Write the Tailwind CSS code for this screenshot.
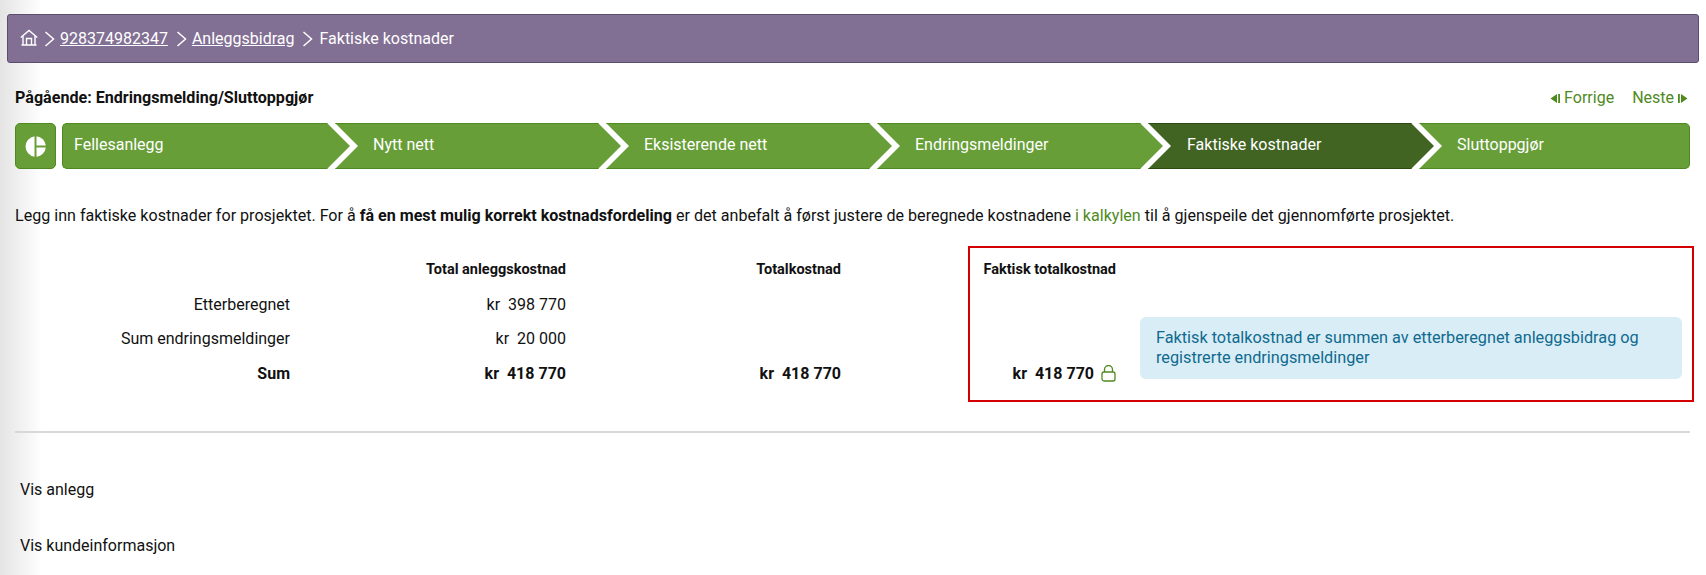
<!DOCTYPE html>
<html lang="en">

<head>
    <meta charset="UTF-8">
    <script src="https://cdn.jsdelivr.net/npm/@tailwindcss/browser@4"></script>
    <title>Faktiske kostnader</title>
</head>

<body class="bg-white text-[#111] font-['Roboto',sans-serif] text-[16px] h-[575px] overflow-hidden relative">

    <!-- left edge shade -->
    <div class="absolute left-0 top-0 bottom-0 w-[42px] bg-gradient-to-r from-[#e4e4e4] to-transparent pointer-events-none"></div>

    <div class="relative pl-[7px] pr-[7px] pt-[14px]">

        <!-- Breadcrumb -->
        <nav class="h-[49px] flex items-center gap-[6px] pl-[12px] rounded-[3px] bg-[#826f94] border border-[#5c4c6e] text-white">
            <svg class="w-[18px] h-[18px] -mt-[2px]" viewBox="0 0 18 18" fill="none" stroke="currentColor" stroke-width="1.4">
                <path d="M0.8 8.5 9 1.5 17.2 8.5M3 6.8V16H15V6.8M1.5 16H16.5M6.5 16V9.5H11.5V16" />
            </svg>
            <svg class="w-[11px] h-[16px]" viewBox="0 0 11 16" fill="none" stroke="currentColor" stroke-width="1.5"><path d="M1.5 1 9.5 8 1.5 15" /></svg>
            <a class="underline -ml-[1px]">928374982347</a>
            <svg class="w-[11px] h-[16px] ml-[2px]" viewBox="0 0 11 16" fill="none" stroke="currentColor" stroke-width="1.5"><path d="M1.5 1 9.5 8 1.5 15" /></svg>
            <a class="underline -ml-[1px]">Anleggsbidrag</a>
            <svg class="w-[11px] h-[16px] ml-[2px]" viewBox="0 0 11 16" fill="none" stroke="currentColor" stroke-width="1.5"><path d="M1.5 1 9.5 8 1.5 15" /></svg>
            <span>Faktiske kostnader</span>
        </nav>

        <div class="pl-[8px] pr-[9px]">

            <!-- Title row -->
            <div class="flex justify-between items-center mt-[25px] h-[20px]">
                <div class="font-bold text-[16.1px]">Pågående: Endringsmelding/Sluttoppgjør</div>
                <div class="flex items-center text-[#4f8a1e] pr-[2px]">
                    <svg class="w-[12px] h-[11px] mr-[2px]" viewBox="0 0 12 11" fill="currentColor"><path d="M7 1V10L0.5 5.5ZM8.2 1H10V10H8.2Z" /></svg>
                    <span>Forrige</span>
                    <span class="ml-[18px]">Neste</span>
                    <svg class="w-[12px] h-[11px] ml-[2px]" viewBox="0 0 12 11" fill="currentColor"><path d="M5 1V10L11.5 5.5ZM2 1H3.8V10H2Z" /></svg>
                </div>
            </div>

            <!-- Stepper -->
            <div class="flex mt-[15px] h-[46px] text-white">
                <div class="w-[41px] flex items-center justify-center rounded-[5px] bg-[#679e38] border border-[#4f8a1e] mr-[6px]">
                    <svg class="w-[21px] h-[21px]" viewBox="0 0 21 21" fill="white">
                        <path d="M9.5 0.2V20.8A10.4 10.4 0 0 1 9.5 0.2Z" />
                        <path d="M11.5 0.2A10.4 10.4 0 0 1 20.8 9.5H11.5Z" />
                        <path d="M11.5 11.5H20.8A10.4 10.4 0 0 1 11.5 20.8Z" />
                    </svg>
                </div>
                <div class="flex-1 flex min-w-0">
                    <div class="w-[288px] shrink-0 flex items-center pl-[11px] pb-[2px] rounded-l-[5px] bg-[#679e38] border-y border-l border-[#4f8a1e] [clip-path:polygon(0_0,calc(100%-23px)_0,100%_50%,calc(100%-23px)_100%,0_100%)]">Fellesanlegg</div>
                    <div class="w-[286px] shrink-0 -ml-[15px] flex items-center pl-[38px] pb-[2px] bg-[#679e38] border-y border-[#4f8a1e] [clip-path:polygon(0_0,calc(100%-23px)_0,100%_50%,calc(100%-23px)_100%,0_100%,23px_50%)]">Nytt nett</div>
                    <div class="w-[286px] shrink-0 -ml-[15px] flex items-center pl-[38px] pb-[2px] bg-[#679e38] border-y border-[#4f8a1e] [clip-path:polygon(0_0,calc(100%-23px)_0,100%_50%,calc(100%-23px)_100%,0_100%,23px_50%)]">Eksisterende nett</div>
                    <div class="w-[286px] shrink-0 -ml-[15px] flex items-center pl-[38px] pb-[2px] bg-[#679e38] border-y border-[#4f8a1e] [clip-path:polygon(0_0,calc(100%-23px)_0,100%_50%,calc(100%-23px)_100%,0_100%,23px_50%)]">Endringsmeldinger</div>
                    <div class="w-[286px] shrink-0 -ml-[15px] flex items-center pl-[39px] pb-[2px] bg-[#426423] border-y border-[#2c4a12] [clip-path:polygon(0_0,calc(100%-23px)_0,100%_50%,calc(100%-23px)_100%,0_100%,23px_50%)]">Faktiske kostnader</div>
                    <div class="flex-1 -ml-[15px] flex items-center pl-[38px] pb-[2px] rounded-r-[5px] bg-[#679e38] border-y border-r border-[#4f8a1e] [clip-path:polygon(0_0,100%_0,100%_100%,0_100%,23px_50%)]">Sluttoppgjør</div>
                </div>
            </div>

            <!-- Intro -->
            <p class="mt-[35px] leading-[24px] text-[16.08px] whitespace-nowrap">Legg inn faktiske kostnader for prosjektet. For å <b>få en mest mulig korrekt kostnadsfordeling</b> er det anbefalt å først justere de beregnede kostnadene <a class="text-[#4f8a1e]">i kalkylen</a> til å gjenspeile det gjennomførte prosjektet.</p>

            <!-- Costs -->
            <div class="flex mt-[18px]">
                <div class="w-[953px] shrink-0 grid grid-cols-[275px_276px_275px] grid-rows-[repeat(4,34.8px)] items-center text-right pt-[6.5px] h-[156px]">
                    <div></div>
                    <div class="font-bold text-[14.5px]">Total anleggskostnad</div>
                    <div class="font-bold text-[14.5px]">Totalkostnad</div>
                    <div>Etterberegnet</div>
                    <div>kr&nbsp; 398 770</div>
                    <div></div>
                    <div>Sum endringsmeldinger</div>
                    <div>kr&nbsp; 20 000</div>
                    <div></div>
                    <div class="font-bold">Sum</div>
                    <div class="font-bold">kr&nbsp; 418 770</div>
                    <div class="font-bold">kr&nbsp; 418 770</div>
                </div>
                <div class="w-[726px] h-[156px] shrink-0 border-2 border-[#d40000] flex pr-[10px]">
                    <div class="w-[146px] shrink-0 flex flex-col justify-between items-end pt-[11px] pb-[14px]">
                        <div class="font-bold text-[14.5px]">Faktisk totalkostnad</div>
                        <div class="font-bold flex items-center gap-[7px]">
                            <span>kr&nbsp; 418 770</span>
                            <svg class="w-[15px] h-[17px] -mt-[2px]" viewBox="0 0 15 17" fill="none" stroke="#4f8a1e" stroke-width="1.3">
                                <rect x="1" y="7" width="13" height="9" rx="2" />
                                <path d="M3.5 7V4.5A4 4 0 0 1 11.5 4.5V7" />
                            </svg>
                        </div>
                    </div>
                    <div class="flex-1 ml-[24px] mt-[69px] mb-[21px] rounded-[6px] bg-[#d9edf6] text-[#0f6a8f] text-[16.25px] leading-[20px] pl-[16px] pr-[16px] py-[11px]">Faktisk totalkostnad er summen av etterberegnet anleggsbidrag og registrerte endringsmeldinger</div>
                </div>
            </div>

            <hr class="mt-[29px] border-t-2 border-[#d8d8dc]">

            <!-- Expandable sections -->
            <div class="pl-[5px]">
                <div class="mt-[45px] h-[24px] leading-[24px]">Vis anlegg</div>
                <div class="mt-[32px] h-[24px] leading-[24px]">Vis kundeinformasjon</div>
            </div>
        </div>
    </div>

</body>

</html>
